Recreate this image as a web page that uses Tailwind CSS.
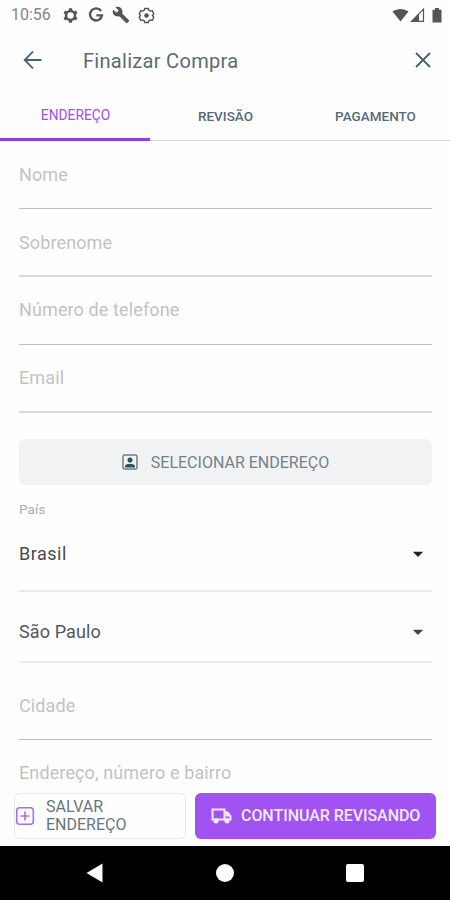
<!DOCTYPE html>
<html lang="pt-BR">
<head>
<meta charset="utf-8">
<title>Finalizar Compra</title>
<script src="https://cdn.jsdelivr.net/npm/@tailwindcss/browser@4"></script>
</head>
<body class="bg-white">
<div class="w-[450px] h-[900px] flex flex-col overflow-hidden bg-[#fefefe] font-[Roboto,sans-serif]">
  <!-- Status bar -->
  <div class="h-[30px] shrink-0 flex items-center pl-[11px] pr-[7px] text-[#555]">
    <span class="text-[16px] leading-5 text-[#858585] w-[51px] whitespace-nowrap">10:56</span>
    <svg class="w-[17px] h-[17px] shrink-0" viewBox="0 0 24 24" fill="none" stroke="currentColor"><circle cx="12" cy="12" r="6.300" stroke-width="3.600"/><path stroke-width="4.600" d="M12 1.800V6M12 18v4.200M3.200 6.900L6.800 9M17.200 15l3.600 2.100M3.200 17.100L6.800 15M17.200 9l3.600-2.100"/></svg>
    <svg class="w-[16px] h-[16px] ml-[9px] shrink-0" viewBox="0 0 24 24" fill="none" stroke="currentColor" stroke-width="3.600"><path d="M19.500 6A9 9 0 1 0 21 12.500H12.500"/></svg>
    <svg class="w-[18px] h-[18px] ml-[8px] shrink-0" viewBox="0 0 24 24" fill="currentColor"><path d="M22.700 19l-9.100-9.100c.9-2.300.4-5-1.500-6.900-2-2-5-2.400-7.400-1.300L9 6 6 9 1.600 4.700C.4 7.100.9 10.100 2.900 12.100c1.900 1.900 4.600 2.400 6.900 1.500l9.100 9.100c.4.4 1 .4 1.400 0l2.300-2.300c.5-.4.5-1.100.1-1.400z"/></svg>
    <svg class="w-[17px] h-[17px] ml-[8px] shrink-0" viewBox="0 0 24 24" fill="none" stroke="currentColor" stroke-width="2" stroke-linejoin="round"><path d="M9.500 2h5l.7 2.500 2.400 1.300 2.500-.7 2.200 4.500-1.800 2.400 1.800 2.400-2.200 4.500-2.500-.7-2.400 1.300-.7 2.500h-5l-.7-2.500-2.400-1.300-2.500.7-2.200-4.500L3.500 12 1.700 9.600l2.200-4.500 2.500.7 2.400-1.300z"/><circle cx="12" cy="12" r="3.200" fill="currentColor" stroke="none"/></svg>
    <div class="ml-auto flex items-center">
      <svg class="w-[17px] h-[14px]" viewBox="0 0 17 14" fill="currentColor"><path d="M.5 3.500C5 0 12 0 16.500 3.500L8.500 13.500z"/></svg>
      <svg class="w-[15px] h-[14px] ml-[1px]" viewBox="0 0 15 14" fill="none" stroke="currentColor"><path d="M1.500 13.300L13.500 1.200v12.100z" stroke-width="1.200"/><path d="M1 13.800L9 5.500v8.300z" fill="currentColor" stroke="none"/></svg>
      <svg class="w-[10px] h-[15px] ml-[7px] mr-[1px]" viewBox="0 0 10 15" fill="currentColor"><path d="M3 0h4v1.700h2.500V14.500H.5V1.700H3z"/></svg>
    </div>
  </div>
  <!-- App bar -->
  <header class="h-[60px] shrink-0 flex items-center pl-[23px] pr-[18px] text-[#446072]">
    <svg class="w-[20px] h-[20px]" viewBox="0 0 20 20" fill="none" stroke="currentColor" stroke-width="1.800"><path d="M18.500 10H2M10 1.700L1.700 10l8.300 8.300"/></svg>
    <h1 class="ml-[40px] pt-px text-[20px] leading-6 tracking-[0.3px] text-[#5a6b76]">Finalizar Compra</h1>
    <svg class="w-[18px] h-[18px] ml-auto" viewBox="0 0 18 18" fill="none" stroke="currentColor" stroke-width="1.800"><path d="M2 2l14 14M16 2L2 16"/></svg>
  </header>
  <!-- Tabs -->
  <nav class="h-[51px] shrink-0 grid grid-cols-3 text-center text-[13.500px] leading-[48px] text-[#566a74]">
    <span class="h-[51px] pt-px pl-px border-b-[3px] border-[#8e3fdc] text-[#a04ff2] font-normal text-[13.800px]">ENDEREÇO</span>
    <span class="h-[51px] border-b border-[#d5d7d8] font-medium pt-[2px] pl-px">REVISÃO</span>
    <span class="h-[51px] border-b border-[#d5d7d8] font-medium pt-[2px] pl-px">PAGAMENTO</span>
  </nav>
  <!-- Form -->
  <main class="h-[649px] shrink-0 overflow-hidden pl-[19px] pr-[18px] text-[18px] leading-6 tracking-[0.12px] text-[#c2c2c2]">
    <div class="h-[68px] pt-[22px] border-b border-[#bdbdbd]">Nome</div>
    <div class="h-[68px] pt-[22px] border-b-2 border-[#d8d9d9]">Sobrenome</div>
    <div class="h-[68px] pt-[21px] border-b border-[#bdbdbd]">Número de telefone</div>
    <div class="h-[68px] pt-[21px] border-b-2 border-[#d8d9d9]">Email</div>
    <div class="mt-[26px] h-[46px] rounded-[6px] bg-[#f0f2f4] flex items-center justify-center text-[16px] tracking-normal text-[#75828a]">
      <svg class="w-[16px] h-[16px] mr-[13px]" viewBox="0 0 16 16" fill="none" stroke="#6c8089" stroke-width="1.500"><rect x="1" y="1" width="14" height="14" rx="1.500"/><circle cx="8" cy="6" r="2.500" fill="#2f4f5c" stroke="none"/><path d="M3 13.500v-1.500c1-3 9-3 10 0v1.500z" fill="#2f4f5c" stroke="none"/></svg>
      <span class="pt-px">SELECIONAR ENDEREÇO</span>
    </div>
    <div class="mt-[14px] h-5 leading-5 text-[13.500px] text-[#adadad]">País</div>
    <div class="h-[73px] pt-[23px] border-b-2 border-[#e9e9e9] flex justify-between pr-[8px] text-[#484b4e]">
      <span class="tracking-[0.5px]">Brasil</span>
      <svg class="w-[12px] h-[7px] mt-[9px]" viewBox="0 0 12 7" fill="#222"><path d="M.8.8h10.400L6 6z"/></svg>
    </div>
    <div class="h-[71px] pt-[28px] border-b-2 border-[#eee] flex justify-between pr-[8px] text-[#54575a]">
      <span>São Paulo</span>
      <svg class="w-[12px] h-[7px] mt-[9px]" viewBox="0 0 12 7" fill="#444"><path d="M.8.8h10.400L6 6z"/></svg>
    </div>
    <div class="h-[77px] pt-[31px] border-b border-[#bdbfc2]">Cidade</div>
    <div class="pt-[21px]">Endereço, número e bairro</div>
  </main>
  <!-- Actions -->
  <footer class="h-[56px] shrink-0 flex pt-[3px] pb-[7px] pl-[14px] pr-[13px] gap-[9px]">
    <button class="w-[172px] h-[46px] rounded-[6px] border border-[#e9eaec] flex items-center text-left text-[16px] leading-[18px] text-[#66767e]">
      <svg class="w-[20px] h-[20px] mr-[11px] shrink-0" viewBox="0 0 20 20" fill="none" stroke="#ad6bf3" stroke-width="1.600"><rect x="1.700" y="1.700" width="16.600" height="16.600" rx="3"/><path d="M10 5.500v9M5.500 10h9"/></svg>
      <span>SALVAR<br>ENDEREÇO</span>
    </button>
    <button class="w-[241px] h-[46px] rounded-[6px] bg-[#a052f3] flex items-center pl-[16px] text-[16px] tracking-[-0.05px] font-medium text-[#f5e9ff] whitespace-nowrap">
      <svg class="w-[21px] h-[16px] mr-[9px] shrink-0" viewBox="0 0 21 16" fill="none" stroke="currentColor" stroke-width="2"><path d="M2 1.500h11.500v10H1.500v-10zM13.500 4.500h3l3 3.500v3.500h-6z"/><path d="M14.500 5h2l2.500 3.500h-4.500z" fill="currentColor" stroke="none"/><circle cx="5" cy="12.800" r="2.600" fill="currentColor" stroke="none"/><circle cx="16" cy="12.800" r="2.600" fill="currentColor" stroke="none"/></svg>
      <span>CONTINUAR REVISANDO</span>
    </button>
  </footer>
  <!-- System navigation -->
  <div class="h-[54px] shrink-0 bg-black flex items-center pl-[86px]">
    <svg class="w-[17px] h-[20px]" viewBox="0 0 17 20" fill="#fff"><path d="M16.500.5v19L.5 10z"/></svg>
    <span class="ml-[113px] size-[18px] rounded-full bg-white"></span>
    <span class="ml-[112px] size-[18px] rounded-[2px] bg-white"></span>
  </div>
</div>
</body>
</html>
